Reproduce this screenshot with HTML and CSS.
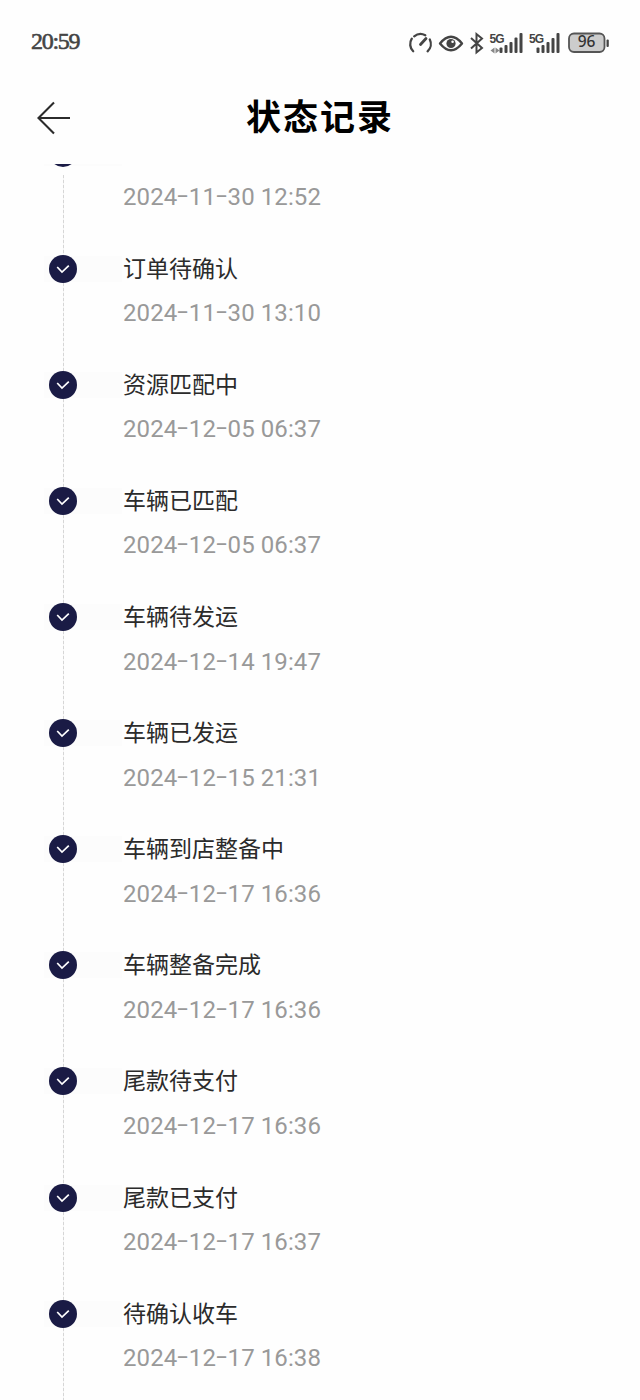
FILE: index.html
```html
<!DOCTYPE html>
<html lang="zh-CN">
<head>
    <meta charset="UTF-8" />
    <meta name="viewport" content="width=device-width, initial-scale=1.0" />
    <title>状态记录</title>
    <link rel="stylesheet" href="styles.css">
</head>
<body>

<div class="status-bar">
    <div class="clock">20:59</div>
    <svg class="status-icons" width="202" height="26" viewBox="408 30 202 26">
        <!-- Speed gauge -->
        <g fill="none" stroke="#444" stroke-width="2.3" stroke-linecap="round">
            <path d="M413.200 51.300A10 10 0 0 1 411.800 38.700"/>
            <path d="M414.200 36.300A10 10 0 0 1 425.300 35.200"/>
            <path d="M429.800 39.500A10 10 0 0 1 427.600 51.300"/>
            <path d="M420.500 44.500L426 38.500" stroke-width="2.8"/>
        </g>
        <!-- Eye -->
        <path d="M440 43.500Q451 30 462 43.500Q451 57 440 43.500Z" fill="none" stroke="#444" stroke-width="2.4" stroke-linejoin="round"/>
        <circle cx="451" cy="43.500" r="4.600" fill="#444"/>
        <circle cx="452.600" cy="41.800" r="1.300" fill="#fff"/>
        <!-- Bluetooth -->
        <path d="M471 38L482 48L476.500 52.500V34L482 38.500L471 48.500" fill="none" stroke="#444" stroke-width="2"/>
        <!-- First SIM signal -->
        <text class="net" x="489.500" y="42.500">5G</text>
        <path d="M490.500 50.500l4-3v6zM499.500 50.500l-4-3v6z" fill="#888"/>
        <g fill="#444">
            <rect x="499.500" y="47.500" width="3" height="5.500" rx="1"/>
            <rect x="504.500" y="45" width="3" height="8" rx="1"/>
            <rect x="509.500" y="42" width="3" height="11" rx="1"/>
            <rect x="514.500" y="37.500" width="3" height="15.500" rx="1"/>
            <rect x="519.500" y="33" width="3" height="20" rx="1"/>
        </g>
        <!-- Second SIM signal -->
        <text class="net" x="529" y="42.500">5G</text>
        <g fill="#444">
            <rect x="536.500" y="47.500" width="3" height="5.500" rx="1"/>
            <rect x="541.500" y="45" width="3" height="8" rx="1"/>
            <rect x="546.500" y="42" width="3" height="11" rx="1"/>
            <rect x="551.500" y="38" width="3" height="15" rx="1"/>
            <rect x="556.500" y="33" width="3" height="20" rx="1"/>
        </g>
        <!-- Battery -->
        <rect x="569" y="33.500" width="35.500" height="18.500" rx="5" fill="#ccc" stroke="#555" stroke-width="1.800"/>
        <rect x="606.500" y="39.500" width="2.300" height="7.500" rx="1" fill="#444"/>
        <text class="battery-level" x="586.500" y="47.400">96</text>
    </svg>
</div>

<div class="header">
    <svg class="back" width="34" height="34" viewBox="0 0 34 34">
        <path d="M18 1.500L2.500 17L18 32.500M2.500 17H34" fill="none" stroke="#2b2b2b" stroke-width="2.1"/>
    </svg>
    <h1>状态记录</h1>
</div>

<!-- Timeline rows are built from the records below -->
<div class="timeline" id="timeline"></div>

<script>
    const records = [
        ["", "2024-11-30 12:52"],
        ["订单待确认", "2024-11-30 13:10"],
        ["资源匹配中", "2024-12-05 06:37"],
        ["车辆已匹配", "2024-12-05 06:37"],
        ["车辆待发运", "2024-12-14 19:47"],
        ["车辆已发运", "2024-12-15 21:31"],
        ["车辆到店整备中", "2024-12-17 16:36"],
        ["车辆整备完成", "2024-12-17 16:36"],
        ["尾款待支付", "2024-12-17 16:36"],
        ["尾款已支付", "2024-12-17 16:37"],
        ["待确认收车", "2024-12-17 16:38"]
    ];

    document.getElementById('timeline').innerHTML = records.map(([name, time]) => `
        <div class="record">
            <div class="marker">
                <svg class="dot" width="28" height="28" viewBox="0 0 28 28">
                    <circle cx="14" cy="14" r="14" fill="#1a1b45"/>
                    <path d="M8.200 12L13 17L19.800 10.700" fill="none" stroke="#fff" stroke-width="1.700"/>
                </svg>
                <div class="line"></div>
            </div>
            <div class="detail">
                <div class="name">${name}</div>
                <div class="time">${time.replace(/-/g, '<span class="dash">-</span>')}</div>
            </div>
        </div>`).join('');
</script>

</body>
</html>
```
FILE: styles.css
```css
* {
    box-sizing: border-box;
}
body {
    margin: 0;
    height: 1400px;
    overflow: hidden;
    background-color: #fefefe;
    font-family: "Noto Sans CJK SC", sans-serif;
    color: #2b2b2b;
}
.status-bar {
    display: flex;
    justify-content: space-between;
    height: 80px;
    padding: 30px 30px 0 31px;
}
.clock {
    font-family: "Liberation Serif", serif;
    font-size: 24px;
    line-height: 22px;
    letter-spacing: -1.3px;
    color: #444;
    -webkit-text-stroke: 0.6px #444;
}
.net {
    font-family: "Liberation Sans", sans-serif;
    font-size: 12px;
    font-weight: bold;
    letter-spacing: -1px;
    fill: #444;
}
.battery-level {
    font-family: "Noto Sans", sans-serif;
    font-size: 15.5px;
    font-weight: 500;
    text-anchor: middle;
    fill: #333;
}
.header {
    display: grid;
    grid-template-columns: 34px 1fr 34px;
    align-items: center;
    height: 84px;
    padding: 0 36px 8px;
}
.back {
    margin-top: -1px;
}
h1 {
    margin: -6px 0 0;
    font-size: 35px;
    line-height: 50px;
    letter-spacing: 2px;
    text-align: center;
    color: #000;
}
.timeline {
    height: 1236px;
    overflow: hidden;
}
.record {
    display: flex;
    height: 116.1px;
}
.record:first-child {
    margin-top: -25.3px;
}
.marker {
    display: flex;
    flex-direction: column;
    align-items: flex-start;
    width: 79px;
    margin-left: 44px;
    padding-left: 5px;
    background: linear-gradient(#fcfcfc, #fcfcfc) no-repeat 0 1px / 78px 26px;
}
.dot {
    flex: none;
}
.line {
    flex: 1;
    width: 1px;
    margin-left: 14px;
    background: repeating-linear-gradient(#d6d6d6 0 3px, #f4f4f4 3px 5px);
}
.record:first-child .line {
    margin-top: 8px;
}
.name {
    height: 26px;
    font-size: 23px;
    line-height: 25px;
}
.time {
    margin-top: 18.5px;
    font-family: Roboto, sans-serif;
    font-size: 24px;
    line-height: 28px;
    letter-spacing: 0.1px;
    color: #999;
}
.dash {
    display: inline-block;
    width: 11.5px;
    text-align: center;
    transform: translateY(-2px) scaleX(1.6);
}
```
